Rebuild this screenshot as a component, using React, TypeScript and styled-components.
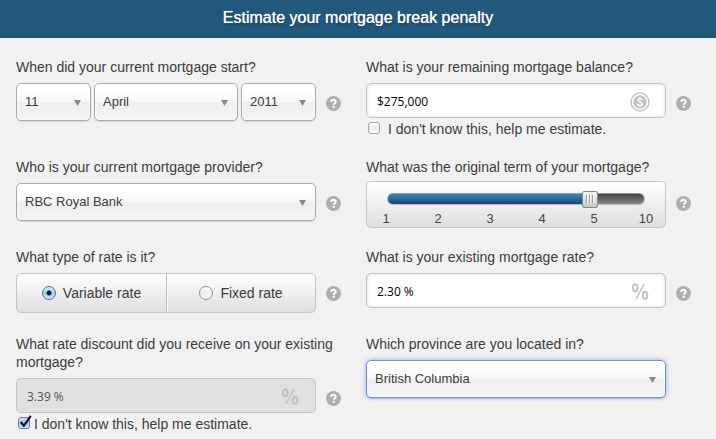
import React, { useState } from 'react';
import styled, { createGlobalStyle, css } from 'styled-components';

const GlobalStyle = createGlobalStyle`
  *, *::before, *::after { box-sizing: border-box; }
  body {
    margin: 0;
    background: #f1f1f1;
    color: #444;
    font-family: "Liberation Sans", Arial, sans-serif;
    font-size: 14px;
    line-height: 18px;
  }
`;

const Header = styled.header`
  background: #20597d;
  height: 38px;
  display: flex;
  align-items: center;
  justify-content: center;
  padding-bottom: 3px;
`;

const Title = styled.h1`
  margin: 0;
  color: #fff;
  font-size: 16px;
  line-height: 20px;
  font-weight: 400;
  text-shadow: 0 0 1px #fff, 0 1px 2px rgba(0, 0, 0, 0.6);
`;

const Form = styled.form`
  display: grid;
  grid-template-columns: 1fr 1fr;
  gap: 20px 25px;
  padding: 20px 25px 0 16px;
`;

const Field = styled.div`
  min-width: 0;
`;

const labelStyle = css<{ $tight?: boolean }>`
  display: block;
  color: #3c3c3c;
  font-size: 14px;
  line-height: 18px;
  margin-bottom: ${(p) => (p.$tight ? 5 : 7)}px;
`;
const Label = styled.label<{ $tight?: boolean }>`${labelStyle}`;
const GroupLabel = styled.div<{ $tight?: boolean }>`${labelStyle}`;

const ControlRow = styled.div<{ $helpOffset?: number }>`
  display: grid;
  grid-template-columns: minmax(0, 1fr) 15px;
  gap: 10px;
  align-items: start;

  > button {
    margin-top: ${(p) => p.$helpOffset ?? 13}px;
  }
`;

const HelpButton = styled.button`
  width: 15px;
  height: 15px;
  padding: 0;
  border: 0;
  background: none;
  cursor: pointer;

  svg { display: block; }
`;

const DateGroup = styled.div`
  display: grid;
  grid-template-columns: 75px 1fr 75px;
  gap: 3px;
`;

const SelectBox = styled.div`
  position: relative;

  > svg {
    position: absolute;
    right: 10px;
    top: 17px;
    pointer-events: none;
  }
`;

const Select = styled.select<{ $active?: boolean }>`
  appearance: none;
  display: block;
  width: 100%;
  height: 38px;
  padding: 0 24px 0 8px;
  border: 1px solid ${(p) => (p.$active ? '#5897fb' : '#aaa')};
  border-radius: 5px;
  background: linear-gradient(#fff 20%, #f6f6f6 50%, #eee 52%, #f4f4f4 100%);
  box-shadow: 0 0 3px #fff inset, 0 1px 1px rgba(0, 0, 0, 0.1)
    ${(p) => (p.$active ? ', 0 0 4px rgba(0, 0, 0, 0.3)' : '')};
  color: #3c3c3c;
  font: 13px/18px "Liberation Sans", Arial, sans-serif;
  outline: 0;
`;

const InputBox = styled.div`
  position: relative;

  > svg {
    position: absolute;
    right: 16px;
    top: 9px;
    pointer-events: none;
  }
`;

const Input = styled.input`
  display: block;
  width: 100%;
  height: 35px;
  padding: 2px 44px 0 10px;
  border: 1px solid #c3c3c3;
  border-radius: 5px;
  background: #fff;
  box-shadow: inset 0 0 3px rgba(0, 0, 0, 0.15);
  color: #000;
  font: 12px/18px "Open Sans", "Noto Sans", sans-serif;
  outline: 0;

  &:disabled {
    background: #e0e0e0;
    color: #555;
    box-shadow: none;
  }
`;

const CheckLabel = styled.label<{ $gap: number }>`
  display: flex;
  align-items: flex-start;
  gap: ${(p) => p.$gap}px;
  padding: 2px 0 0 2px;
  color: #3c3c3c;
  font-size: 14px;
  line-height: 18px;
`;

const CheckMark = styled.span`
  position: relative;
  flex: none;
  width: 12px;
  height: 12px;
  margin-top: 2px;

  svg {
    position: absolute;
    left: 0;
    bottom: 0;
    pointer-events: none;
  }
`;

const Checkbox = styled.input`
  appearance: none;
  display: block;
  width: 12px;
  height: 12px;
  margin: 0;
  border: 1px solid #a2a2a2;
  border-radius: 3px;
  background: linear-gradient(#fff, #eee 50%, #fff);

  &:checked {
    border-color: #6c7fa8;
    background: linear-gradient(#d5e6fa, #93c1ef 50%, #c9eeff);
  }
`;

const panelStyle = css`
  border: 1px solid #c6c6c6;
  border-radius: 5px;
  background: linear-gradient(#fff, #dfdfdf);
`;

const Segmented = styled.div`
  ${panelStyle}
  display: grid;
  grid-template-columns: 1fr 1fr;
  height: 40px;
  margin-bottom: 2px;
`;

const Segment = styled.label`
  display: flex;
  align-items: center;
  justify-content: center;
  gap: 7px;
  color: #3c3c3c;

  & + & {
    border-left: 1px solid #bbb;
    box-shadow: inset 1px 0 #fff;
  }
`;

const Radio = styled.input`
  appearance: none;
  width: 14px;
  height: 14px;
  margin: 0;
  border: 1px solid #8e8e8e;
  border-radius: 50%;
  background: linear-gradient(#fff, #ececec 50%, #fff);

  &:checked {
    border-color: #5c6a9c;
    background:
      radial-gradient(circle, #0b1a33 0 2px, transparent 3px),
      linear-gradient(#dcecfc, #9dc8f2 50%, #d0f1ff);
  }
`;

const SliderPanel = styled.div`
  ${panelStyle}
  height: 47px;
  padding: 11px 20px 0;
`;

const SliderTrack = styled.div`
  height: 12px;
  border: 1px solid #bbb;
  border-top-color: #999;
  border-radius: 6px;
  background: linear-gradient(#444, #888);
`;

const Slider = styled.input`
  appearance: none;
  display: block;
  width: calc(100% + 2px);
  height: 10px;
  margin: 0;
  border-radius: 5px 0 0 5px;
  background: linear-gradient(#2d8abb, #1c4775) no-repeat;
  outline: 0;

  &::-webkit-slider-thumb {
    appearance: none;
    width: 16px;
    height: 17px;
    border: 1px solid #888;
    border-radius: 2px;
    background:
      linear-gradient(90deg, transparent 3px, #999 3px 4px, #fff 4px 5px, transparent 5px 6px,
        #999 6px 7px, #fff 7px 8px, transparent 8px 9px, #999 9px 10px, #fff 10px 11px, transparent 11px)
        center / 14px 8px no-repeat,
      linear-gradient(#f5f5f5, #c8c8c8);
  }
`;

const Ticks = styled.div`
  display: flex;
  justify-content: space-between;
  margin: 5px -1px 0;
  font-size: 13px;
  line-height: 18px;

  span {
    width: 0;
    display: flex;
    justify-content: center;
  }
`;

const Help = ({ topic }: { topic: string }) => (
  <HelpButton type="button" aria-label={`Help: ${topic}`}>
    <svg width="15" height="15" viewBox="0 0 15 15" fill="none">
      <circle cx="7.5" cy="7.5" r="7.5" fill="#aeaeae" />
      <path d="M5.2 5.9c0-2.7 4.5-2.7 4.5-.2 0 1.5-1.9 1.5-1.9 3" stroke="#fff" strokeWidth="2" />
      <rect x="6.7" y="9.8" width="2.2" height="2" fill="#fff" />
    </svg>
  </HelpButton>
);

const Arrow = () => (
  <svg width="7" height="6" viewBox="0 0 7 6" aria-hidden="true">
    <path d="M0 0h7L3.5 6z" fill="#888" />
  </svg>
);

const CoinIcon = () => (
  <svg width="20" height="20" viewBox="0 0 20 20" fill="none" aria-hidden="true">
    <circle cx="10" cy="10" r="9" stroke="#c2c2c2" strokeWidth="1.4" />
    <circle cx="10" cy="10" r="6.7" fill="#c2c2c2" />
    <path
      d="M12.3 8c-.3-1.9-4.4-1.9-4.4 0 0 2.3 4.4 1.5 4.4 3.9 0 2-4.5 2-4.7-.1M10 5v1.6M10 13.4V15"
      stroke="#fff"
      strokeWidth="1.4"
    />
  </svg>
);

const PercentIcon = () => (
  <svg width="19" height="18" viewBox="0 0 19 18" fill="none" stroke="#c3c3c3" aria-hidden="true">
    <ellipse cx="4.2" cy="5.8" rx="2.3" ry="3.5" strokeWidth="2" />
    <ellipse cx="14" cy="13.2" rx="2.3" ry="3.5" strokeWidth="2" />
    <path d="M13.2 1.8L5 17.2" strokeWidth="1.5" />
  </svg>
);

const TickIcon = () => (
  <svg width="14" height="14" viewBox="0 0 14 14" fill="none" aria-hidden="true">
    <path d="M2.8 7l3 3.8L12.8.8" stroke="#08111f" strokeWidth="2.1" />
  </svg>
);

type DropDownProps = { id?: string; name?: string; value: string; active?: boolean };

const DropDown = ({ id, name, value, active }: DropDownProps) => (
  <SelectBox>
    <Select id={id} aria-label={name} defaultValue={value} $active={active}>
      <option>{value}</option>
    </Select>
    <Arrow />
  </SelectBox>
);

type EstimateProps = { checked: boolean; gap: number; onChange: (on: boolean) => void };

const EstimateOption = ({ checked, gap, onChange }: EstimateProps) => (
  <CheckLabel $gap={gap}>
    <CheckMark>
      <Checkbox type="checkbox" checked={checked} onChange={(e) => onChange(e.target.checked)} />
      {checked && <TickIcon />}
    </CheckMark>
    I don't know this, help me estimate.
  </CheckLabel>
);

const TERMS = [1, 2, 3, 4, 5, 10];

export default function App() {
  const [estimateBalance, setEstimateBalance] = useState(false);
  const [estimateDiscount, setEstimateDiscount] = useState(true);
  const [term, setTerm] = useState(4);

  return (
    <>
      <GlobalStyle />
      <Header>
        <Title>Estimate your mortgage break penalty</Title>
      </Header>
      <Form>
        <Field role="group" aria-labelledby="start">
          <GroupLabel id="start">When did your current mortgage start?</GroupLabel>
          <ControlRow>
            <DateGroup>
              <DropDown name="Day" value="11" />
              <DropDown name="Month" value="April" />
              <DropDown name="Year" value="2011" />
            </DateGroup>
            <Help topic="start date" />
          </ControlRow>
        </Field>

        <Field>
          <Label htmlFor="balance">What is your remaining mortgage balance?</Label>
          <ControlRow>
            <InputBox>
              <Input id="balance" defaultValue="$275,000" disabled={estimateBalance} />
              <CoinIcon />
            </InputBox>
            <Help topic="remaining balance" />
          </ControlRow>
          <EstimateOption checked={estimateBalance} gap={8} onChange={setEstimateBalance} />
        </Field>

        <Field>
          <Label htmlFor="provider">Who is your current mortgage provider?</Label>
          <ControlRow>
            <DropDown id="provider" value="RBC Royal Bank" />
            <Help topic="provider" />
          </ControlRow>
        </Field>

        <Field>
          <Label htmlFor="term" $tight>What was the original term of your mortgage?</Label>
          <ControlRow $helpOffset={15}>
            <SliderPanel>
              <SliderTrack>
                <Slider
                  id="term"
                  type="range"
                  min={0}
                  max={TERMS.length - 1}
                  value={term}
                  aria-valuetext={`${TERMS[term]} years`}
                  onChange={(e) => setTerm(Number(e.target.value))}
                  style={{ backgroundSize: `${(term / (TERMS.length - 1)) * 100}% 100%` }}
                />
              </SliderTrack>
              <Ticks>
                {TERMS.map((t) => (
                  <span key={t}>{t}</span>
                ))}
              </Ticks>
            </SliderPanel>
            <Help topic="original term" />
          </ControlRow>
        </Field>

        <Field role="radiogroup" aria-labelledby="rate-type">
          <GroupLabel id="rate-type">What type of rate is it?</GroupLabel>
          <ControlRow>
            <Segmented>
              <Segment>
                <Radio type="radio" name="rateType" defaultChecked />
                Variable rate
              </Segment>
              <Segment>
                <Radio type="radio" name="rateType" />
                Fixed rate
              </Segment>
            </Segmented>
            <Help topic="rate type" />
          </ControlRow>
        </Field>

        <Field>
          <Label htmlFor="rate">What is your existing mortgage rate?</Label>
          <ControlRow>
            <InputBox>
              <Input id="rate" defaultValue="2.30 %" />
              <PercentIcon />
            </InputBox>
            <Help topic="existing rate" />
          </ControlRow>
        </Field>

        <Field>
          <Label htmlFor="discount">What rate discount did you receive on your existing mortgage?</Label>
          <ControlRow>
            <InputBox>
              <Input id="discount" defaultValue="3.39 %" disabled={estimateDiscount} />
              <PercentIcon />
            </InputBox>
            <Help topic="rate discount" />
          </ControlRow>
          <EstimateOption checked={estimateDiscount} gap={4} onChange={setEstimateDiscount} />
        </Field>

        <Field>
          <Label htmlFor="province">Which province are you located in?</Label>
          <ControlRow>
            <DropDown id="province" value="British Columbia" active />
          </ControlRow>
        </Field>
      </Form>
    </>
  );
}
